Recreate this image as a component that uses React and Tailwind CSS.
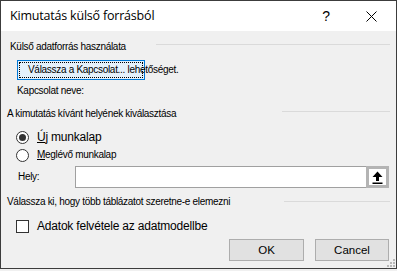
import React from "react";

function Sep({ className = "" }) {
  return <div className={"h-px bg-[#dadada] " + className} />;
}

export default function App() {
  return (
    <div className="w-[397px] h-[271px] bg-[#f0f0f0] font-['Liberation_Sans',Arial,sans-serif] text-black overflow-hidden">
      <div className="w-[397px] h-[269px] border border-[#3c3c3c] flex flex-col">
        {/* Title bar */}
        <div className="h-[30px] bg-white flex items-center pl-[9px] shrink-0">
          <span className="text-[12.5px] font-['Open_Sans',sans-serif] tracking-[-0.2px] leading-none">Kimutatás külső forrásból</span>
          <span className="ml-auto text-[14px] leading-none mr-[36px] font-['Liberation_Sans',sans-serif]">?</span>
          <svg width="11" height="11" viewBox="0 0 11 11" className="mr-[19px]">
            <path d="M0.5 0.5 L10.5 10.5 M10.5 0.5 L0.5 10.5" stroke="#000" strokeWidth="1" />
          </svg>
        </div>
        {/* Body */}
        <div className="flex-1 flex flex-col pl-[6px] pr-[6px] text-[10px] tracking-[-0.3px] leading-[14px] relative">
          <div className="flex items-start mt-[9px]">
            <span className="pl-[3px]">Külső adatforrás használata</span>
            <Sep className="ml-auto w-[234px] mt-[4px]" />
          </div>
          <div className="ml-[10px] mt-[6px] h-[20px] w-[128px] border border-[#0078d7] bg-[#e5f1fb] p-[1px]">
            <div className="h-full w-full border border-dotted border-black flex items-center pl-[8px] whitespace-nowrap">
              <span>Válassza a Kapcsolat... lehetőséget.</span>
            </div>
          </div>
          <div className="ml-[10px] mt-[4px]">Kapcsolat neve:</div>
          <div className="flex items-start mt-[9px]">
            <span>A kimutatás kívánt helyének kiválasztása</span>
            <Sep className="ml-auto w-[108px] mt-[4px]" />
          </div>
          <div className="flex items-center mt-[8px] h-[16px] ml-[9px]">
            <div className="w-[13px] h-[13px] rounded-full border border-[#333] bg-white flex items-center justify-center">
              <div className="w-[7px] h-[7px] rounded-full bg-[#333]" />
            </div>
            <span className="ml-[8px] text-[12px] tracking-[-0.2px] leading-[16px]"><span className="underline">Ú</span>j munkalap</span>
          </div>
          <div className="flex items-center mt-[2px] h-[16px] ml-[9px]">
            <div className="w-[13px] h-[13px] rounded-full border border-[#333] bg-white" />
            <span className="ml-[8px]"><span className="underline">M</span>eglévő munkalap</span>
          </div>
          <div className="flex items-center mt-[3px] h-[22px]">
            <span className="ml-[11px] w-[57px]">Hely:</span>
            <div className="flex-1 h-[22px] border border-[#a0a0a0] bg-white flex justify-end mr-px">
              <div className="w-[23px] h-[22px] -mt-px -mr-px border-[3px] border-[#b4b4b4] bg-white flex items-center justify-center">
                <svg width="11" height="13" viewBox="0 0 11 13">
                  <path d="M5.5 0.5 L10.5 6 L7 6 L7 10 L4 10 L4 6 L0.5 6 Z" fill="#000" />
                  <rect x="0.5" y="11.5" width="10" height="1.5" fill="#000" />
                </svg>
              </div>
            </div>
          </div>
          <div className="flex items-start mt-[7px]">
            <span>Válassza ki, hogy több táblázatot szeretne-e elemezni</span>
            <Sep className="ml-auto w-[106px] mt-[6px]" />
          </div>
          <div className="flex items-center mt-[9px] h-[16px] ml-[9px]">
            <div className="w-[13px] h-[13px] border border-[#333] bg-white" />
            <span className="ml-[8px] text-[12px] tracking-[-0.2px] leading-[16px]">Adatok felvétele az adatmodellbe</span>
          </div>
          <div className="flex justify-end gap-[11px] mt-[5px] pr-px tracking-normal">
            <button className="w-[75px] h-[22px] border border-[#adadad] bg-[#e1e1e1] text-[11.5px] font-['Liberation_Sans',sans-serif]">OK</button>
            <button className="w-[74px] h-[22px] border border-[#adadad] bg-[#e1e1e1] text-[11.5px] font-['Liberation_Sans',sans-serif]">Cancel</button>
          </div>
          <svg width="9" height="9" viewBox="0 0 9 9" className="absolute right-[1px] bottom-[1px]">
            <rect x="7" y="1" width="2" height="2" fill="#b8b8b8" />
            <rect x="4" y="4" width="2" height="2" fill="#b8b8b8" />
            <rect x="7" y="4" width="2" height="2" fill="#b8b8b8" />
            <rect x="1" y="7" width="2" height="2" fill="#b8b8b8" />
            <rect x="4" y="7" width="2" height="2" fill="#b8b8b8" />
            <rect x="7" y="7" width="2" height="2" fill="#b8b8b8" />
          </svg>
        </div>
      </div>
    </div>
  );
}
